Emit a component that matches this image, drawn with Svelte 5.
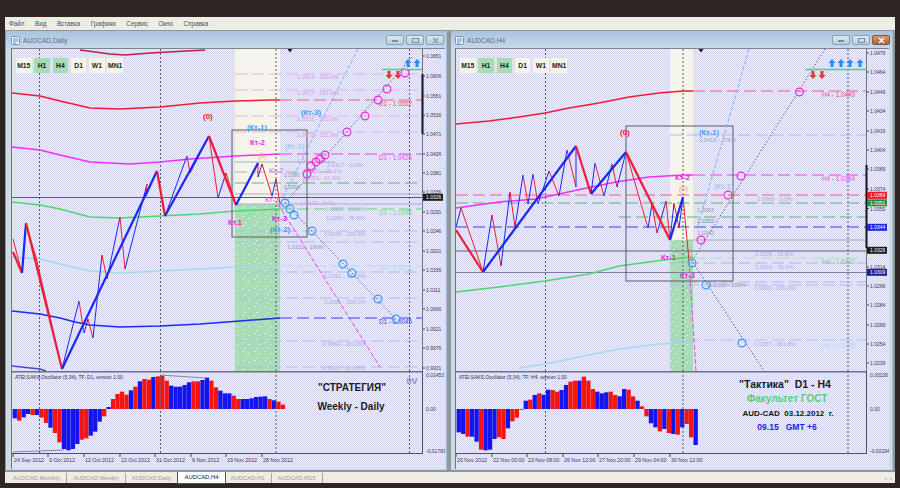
<script>
  // Two MT4 chart windows, all coordinates in page pixels (svg viewBox keeps them absolute)
  const menu = ['Файл', 'Вид', 'Вставка', 'Графики', 'Сервис', 'Окно', 'Справка'];
  const tfs = [
    { name: 'M15' }, { name: 'H1', on: true }, { name: 'H4', on: true },
    { name: 'D1' }, { name: 'W1' }, { name: 'MN1' }
  ];
  const tabs = ['AUDCAD,Monthly', 'AUDCAD,Weekly', 'AUDCAD,Daily', 'AUDCAD,H4', 'AUDCAD,H1', 'AUDCAD,M15'];

  const PINK = '#e6aeea', RED = '#f2607c', MAG = '#f040ea', GRN = '#62d86a', TEAL = '#b8dcea', BLUE = '#3a44e4', PALE = '#aebcea', GRY = '#a9aec4', DGRN = '#62b46c';
  const LBL = '#a9aede', LPK = '#d49ee0';

  const charts = [
    {
      title: 'AUDCAD,Daily', x: 12, w: 410, active: false,
      verticals: [39.5, 160.5, 276, 409.5],
      band: { x: 235, w: 45, split: 205 },
      curves: [
        { c: '#c02040', p: '80,51 110,55 125,56 150,54 205,51' },
        { c: '#f01c2c', p: '12,94 40,97 60,102 90,109 120,110 160,108 200,104 235,102 270,101 280,101' },
        { c: '#f030f0', p: '12,148 40,151 60,156 90,163 110,164 130,165 160,163 190,160 235,157 280,155' },
        { c: '#4cd868', p: '12,203 40,206 60,210 90,218 120,219 160,217 200,215 235,212 280,210' },
        { c: '#a0dce0', p: '12,258 40,260 60,265 90,272 120,274 160,272 200,270 235,268 280,267' },
        { c: '#1c2ce8', p: '12,312 40,315 60,319 75,323 90,326 120,328 160,327 200,325 240,322 280,319' },
        { c: '#4050c0', p: '12,367 40,370 46,372' }
      ],
      solid: [
        { y: 163, a: 235, b: 335, c: GRY }, { y: 195, a: 235, b: 422, c: GRY }, { y: 205, a: 235, b: 422, c: GRY },
        { y: 198.5, a: 12, b: 422, c: '#5c5c6c' }
      ],
      dashes: [
        { y: 75, a: 235, b: 422, c: PINK }, { y: 91, a: 235, b: 422, c: PINK }, { y: 117, a: 235, b: 422, c: PINK },
        { y: 133, a: 235, b: 422, c: PINK }, { y: 101, a: 280, b: 422, c: RED }, { y: 155, a: 280, b: 422, c: MAG },
        { y: 173, a: 235, b: 335, c: GRY }, { y: 184, a: 235, b: 422, c: DGRN }, { y: 210, a: 280, b: 422, c: GRN },
        { y: 232, a: 235, b: 422, c: PALE }, { y: 243, a: 235, b: 422, c: PALE }, { y: 267, a: 280, b: 422, c: TEAL },
        { y: 273, a: 235, b: 422, c: PALE }, { y: 299, a: 235, b: 422, c: PALE }, { y: 319, a: 280, b: 422, c: BLUE },
        { y: 342, a: 235, b: 422, c: PALE }, { y: 368, a: 235, b: 422, c: PALE }
      ],
      box: { x: 232, y: 131, w: 75, h: 107 },
      thin: [[13,240],[22,274],[26,224],[34,252],[36,258],[62,370],[79,302],[84,334],[88,320],[93,339],[102,256],[107,280],[120,218],[125,270],[147,185],[146,197],[157,172],[165,217],[187,157],[190,174],[209,137],[218,199],[226,174],[236,206],[258,164],[258,178],[262,165],[272,197],[276,180],[280,205]],
      thick: [[13,253],[22,274],[26,224],[62,370],[157,172],[165,217],[209,137],[236,206],[258,164]],
      dotted: '412,58 285,204 396,320',
      sky: '358,50 282,200',
      fall: '278,205 380,368',
      magCircles: [[405,74],[387,90],[378,101],[365,117],[347,133],[325,156],[320,160],[316,163],[311,167],[307,175]],
      blueCircles: [[285,204],[290,210],[294,216],[312,232],[343,265],[352,274],[378,300],[396,320]],
      bar: { a: 382, b: 422 },
      ups: [408, 417],
      downs: [389, 398],
      marker: 290,
      texts: [
        { x: 203, y: 120, t: '(0)', c: '#f0202c', b: 1, s: 8 },
        { x: 247, y: 131, t: '(Кт-1)', c: '#3a9cf0', b: 1, s: 7.5 },
        { x: 250, y: 146, t: 'Кт-2', c: '#f020e0', b: 1, s: 7.5 },
        { x: 285, y: 150, t: '(Кт-1)', c: '#8cc0f0', s: 7.5 },
        { x: 301, y: 116, t: '(Кт-3)', c: '#3a9cf0', b: 1, s: 7.5 },
        { x: 258, y: 159, t: '(0)', c: '#e89090', s: 7 },
        { x: 269, y: 174, t: 'Кт-2', c: '#e070e0', s: 7.5 },
        { x: 265, y: 203, t: 'Кт-1', c: '#f040e8', s: 7.5 },
        { x: 272, y: 222, t: 'Кт-3', c: '#f020e0', b: 1, s: 7.5 },
        { x: 228, y: 226, t: 'Кт.1', c: '#f020e0', b: 1, s: 7.5 },
        { x: 270, y: 233, t: '(Кт-2)', c: '#3a9cf0', b: 1, s: 7.5 },
        { x: 297, y: 80, t: '1.0614 - 300.0%', c: LPK }, { x: 297, y: 96, t: '1.0577 - 261.8%', c: LPK },
        { x: 297, y: 122, t: '1.0516 - 200.0%', c: LPK }, { x: 297, y: 138, t: '1.0475 - 161.8%', c: LPK },
        { x: 297, y: 164, t: '1.0...- 0.0%', c: LPK }, { x: 327, y: 168, t: '1.0417 - 0.0%', c: LBL },
        { x: 303, y: 174, t: '1.0381 - 38.2%', c: LPK }, { x: 284, y: 178, t: '1.0390', c: '#9a9ab0', s: 5.2 },
        { x: 302, y: 181, t: '1.0351 - 61.8%', c: LPK }, { x: 284, y: 190, t: '1.0358', c: '#6ca47c', s: 5.2 },
        { x: 300, y: 206, t: '1.0320 - 0.0%', c: LPK }, { x: 326, y: 212, t: '1.0309 - 61.8%', c: LBL },
        { x: 326, y: 221, t: '1.0286 - 76.4%', c: LBL }, { x: 324, y: 237, t: '1.0249 - 100.0%', c: LBL },
        { x: 287, y: 250, t: '1.0221 - 190%', c: '#9498c4' }, { x: 324, y: 279, t: '1.0151 - 161.8%', c: LBL },
        { x: 324, y: 305, t: '1.0091 - 200.0%', c: LBL }, { x: 323, y: 347, t: '0.9993 - 261.8%', c: LBL },
        { x: 323, y: 371, t: '0.9931 - 314.6%', c: LBL },
        { x: 379, y: 107, t: 'D1 - 1.0552', c: '#f0506c', s: 6.3 }, { x: 379, y: 161, t: 'D1 - 1.0425', c: '#f050e8', s: 6.3 },
        { x: 379, y: 216, t: 'D1 - 1.0296', c: '#70d880', s: 6.3 }, { x: 379, y: 271, t: 'D1 - 1.0175', c: '#b0dce0', s: 6.3 },
        { x: 379, y: 325, t: 'D1 - 1.0045', c: '#3a44d4', s: 6.3 }
      ],
      axis: [[57,'1.0651'],[77,'1.0606'],[97,'1.0561'],[116,'1.0516'],[135,'1.0471'],[155,'1.0426'],[174,'1.0381'],[193,'1.0336'],[213,'1.0291'],[232,'1.0246'],[252,'1.0201'],[271,'1.0156'],[291,'1.0111'],[310,'1.0066'],[330,'1.0021'],[349,'0.9976'],[369,'0.9931']],
      axisBar: { a: 75, b: 135 },
      prices: [{ y: 198, t: '1.0326', c: '#1c1c1c' }],
      baseline: 410,
      bars: 'b-28 r-35 b-25 b-15 r-18 b-18 r-26 r-42 b-56 r-72 r-100 b-120 b-124 b-120 b-105 r-92 r-88 b-80 b-68 b-38 r-22 b6 r30 r45 r52 r43 b56 r67 b83 r90 r88 b96 r98 r100 r85 b70 b67 b67 b72 b80 r83 r83 b87 b94 r85 r65 b55 b47 b47 r40 r30 b30 b30 b32 b36 b37 b38 r30 b26 r22 r13',
      indLabel: 'ATEI.SAKS.Oscillator (5,34), TF: D1, version 1.00',
      indLines: ['13,453 64,451', '160,376 206,379'],
      indAxis: [[378,'0.01453'],[412,'0.00'],[454,'-0.01781']],
      notes: [
        { x: 352, y: 392, t: '"СТРАТЕГИЯ"', c: '#1c1c1c', s: 10 },
        { x: 351, y: 411, t: 'Weekly - Daily', c: '#1c1c1c', s: 10 },
        { x: 412, y: 385, t: '0V', c: '#8c94b4', s: 9 }
      ],
      times: [[13,'24 Sep 2012'],[48,'3 Oct 2012'],[84,'12 Oct 2012'],[120,'22 Oct 2012'],[155,'31 Oct 2012'],[191,'9 Nov 2012'],[226,'19 Nov 2012'],[262,'28 Nov 2012']]
    },
    {
      title: 'AUDCAD,H4', x: 457, w: 410, active: true,
      verticals: [546.5, 684, 849],
      band: { x: 671, w: 23, split: 241 },
      curves: [
        { c: '#f01c2c', p: '457,125 490,122 520,118 546,114 570,109 600,104 630,98 660,94 684,92 694,92' },
        { c: '#f030f0', p: '457,209 500,203 537,200 583,190 617,183 650,178 684,176 694,176' },
        { c: '#4cd868', p: '457,293 500,288 546,282 590,275 620,267 650,263 672,260 694,258' },
        { c: '#a0dce0', p: '520,369 546,365 590,356 620,350 660,345 694,343' }
      ],
      solid: [
        { y: 241, a: 690, b: 867, c: GRY }, { y: 252, a: 457, b: 867, c: '#8a8a9a', w: 1.5 }, { y: 273.5, a: 457, b: 867, c: '#7c7ca0', w: 1.2 }
      ],
      dashes: [
        { y: 92, a: 694, b: 867, c: RED }, { y: 136, a: 671, b: 867, c: PALE }, { y: 176, a: 694, b: 867, c: MAG },
        { y: 196, a: 457, b: 867, c: RED }, { y: 204, a: 457, b: 867, c: DGRN }, { y: 218, a: 620, b: 867, c: DGRN },
        { y: 228, a: 457, b: 867, c: BLUE }, { y: 259, a: 694, b: 867, c: '#b0e0c0' }, { y: 264, a: 671, b: 867, c: '#94bcf0' },
        { y: 283, a: 671, b: 867, c: PALE }, { y: 286, a: 671, b: 867, c: PALE }, { y: 341, a: 671, b: 867, c: '#a4c8f0' }
      ],
      box: { x: 627, y: 127, w: 107, h: 155 },
      thin: [[457,228],[462,209],[484,273],[493,216],[502,267],[511,193],[516,228],[524,176],[529,205],[534,175],[539,205],[550,172],[560,197],[568,151],[577,188],[577,147],[592,195],[596,164],[605,197],[613,165],[618,188],[627,153],[649,229],[653,205],[658,234],[667,202],[671,241],[675,204],[680,229],[684,198],[690,262]],
      thick: [[457,231],[484,273],[577,147],[592,195],[627,153],[671,241],[684,198]],
      dotted: '826,50 693,262 765,372',
      sky: '750,50 698,230',
      fall: '690,262 697,372',
      magCircles: [[800.5,93],[742,177],[729,196],[702,241]],
      blueCircles: [[693,264],[707,286],[743,344]],
      bar: { a: 806, b: 867 },
      ups: [833, 842, 851, 861],
      downs: [814, 823],
      marker: 702,
      texts: [
        { x: 621, y: 136, t: '(0)', c: '#f0202c', b: 1, s: 8 },
        { x: 700, y: 136, t: '(Кт-1)', c: '#3a9cf0', b: 1, s: 7.5 },
        { x: 676, y: 181, t: 'Кт-2', c: '#f020e0', b: 1, s: 7.5 },
        { x: 680, y: 192, t: '(0)', c: '#e89070', s: 7 },
        { x: 715, y: 190, t: '(Кт-1)', c: '#8cc0f0', s: 7.5 },
        { x: 662, y: 261, t: 'Кт-1', c: '#f020e0', b: 1, s: 7.5 },
        { x: 681, y: 279, t: 'Кт-3', c: '#f020e0', b: 1, s: 7.5 },
        { x: 700, y: 143, t: '1.0415 - 276%', c: '#a0a4c0' },
        { x: 758, y: 202, t: '1.0369 - 0.0%', c: LBL }, { x: 698, y: 213, t: '1.0361', c: '#9498b8', s: 5.6 },
        { x: 698, y: 224, t: '1.0352', c: '#6c9c7c', s: 5.6 }, { x: 698, y: 236, t: '1.0342', c: '#9498b8', s: 5.6 },
        { x: 756, y: 257, t: '1.0326 - 61.8%', c: LBL }, { x: 756, y: 270, t: '1.0316 - 76.4%', c: LBL },
        { x: 755, y: 291, t: '1.0300 - 100.0%', c: LBL }, { x: 710, y: 288, t: '1.0302 - 190%', c: '#9498c4' },
        { x: 755, y: 347, t: '1.0257 - 161.8%', c: LBL },
        { x: 823, y: 98, t: 'H4 - 1.0449', c: '#f0506c', s: 6.3 }, { x: 823, y: 182, t: 'H4 - 1.0384', c: '#f050e8', s: 6.3 },
        { x: 823, y: 265, t: 'H4 - 1.0320', c: '#70d880', s: 6.3 }, { x: 823, y: 349, t: 'H4 - 1.0255', c: '#b0dce0', s: 6.3 }
      ],
      axis: [[54,'1.0479'],[73,'1.0464'],[93,'1.0449'],[112,'1.0434'],[132,'1.0419'],[151,'1.0404'],[170,'1.0389'],[190,'1.0374'],[209.5,'1.0359'],[268,'1.0314'],[287,'1.0299'],[306,'1.0284'],[326,'1.0269'],[345,'1.0254'],[364,'1.0239']],
      axisBar: { a: 166, b: 249 },
      prices: [
        { y: 196, t: '1.0369', c: '#f01824' }, { y: 203.5, t: '1.0351', c: '#2c8c44' }, { y: 228, t: '1.0344', c: '#1c28e8' },
        { y: 251, t: '1.0326', c: '#1c1c1c' }, { y: 273, t: '1.0309', c: '#1c2484' }
      ],
      baseline: 410,
      bars: 'b-70 b-75 r-83 b-83 b-98 r-122 b-124 b-122 b-90 r-85 r-90 b-58 r-37 r-26 b-2 b25 r28 b42 r47 b43 b58 r57 r52 b57 b72 r82 r85 b85 r97 r85 r60 b52 b47 b50 r52 r42 b38 b60 r58 r38 b25 r8 r-22 b-43 b-55 r-67 b-60 r-72 b-75 r-77 b-55 r-45 r-85 b-108',
      indLabel: 'ATEI.SAKS.Oscillator (5,34), TF: H4, version 1.00',
      indLines: [],
      indAxis: [[378,'0.00236'],[412,'0.00'],[454,'-0.00294']],
      notes: [
        { x: 786, y: 389, t: '"Тактика"  D1 - H4', c: '#1c1c1c', s: 10.5 },
        { x: 788, y: 403, t: 'Факультет ГОСТ', c: '#52d070', s: 10 },
        { x: 789, y: 417, t: 'AUD-CAD  03.12.2012  г.', c: '#141414', s: 8 },
        { x: 788, y: 431, t: '09.15   GMT +6', c: '#1c28e8', s: 8.5 }
      ],
      times: [[457,'20 Nov 2012'],[493,'22 Nov 00:00'],[528,'23 Nov 08:00'],[564,'26 Nov 12:00'],[599,'27 Nov 20:00'],[635,'29 Nov 04:00'],[671,'30 Nov 12:00']]
    }
  ];

  // up moves are blue, down moves red
  function segments(pts) {
    const out = [];
    for (let i = 1; i < pts.length; i++) {
      out.push({ a: pts[i - 1], b: pts[i], c: pts[i][1] < pts[i - 1][1] ? '#1c28f0' : '#f01c34' });
    }
    return out;
  }

  function histogram(c) {
    return c.bars.split(' ').map((s, i) => {
      const v = Number(s.slice(1)) / 3;
      return {
        x: c.x + 0.6 + i * 4.47,
        y: v > 0 ? c.baseline - v : c.baseline,
        h: Math.abs(v),
        c: s[0] === 'b' ? '#1414f0' : '#f41414'
      };
    });
  }
</script>

<div class="screen">
  <div class="terminal">
    <nav class="menu">
      {#each menu as m}<span>{m}</span>{/each}
    </nav>

    <div class="mdi">
      {#each charts as c}
        <section class="window">
          <header class="title">
            <svg class="doc" width="9" height="9" viewBox="0 0 9 9">
              <rect x="0.5" y="0.5" width="8" height="8" rx="1" fill="#e8f0f8" stroke="#6c94bc" />
              <path d="M2 3h5M2 5h5M2 7h3" stroke="#6c94bc" fill="none" />
            </svg>
            <span class="name">{c.title}</span>
            <div class="btns">
              <button class="wbtn"><i class="min"></i></button>
              <button class="wbtn"><i class="max"></i></button>
              <button class="wbtn" class:close={c.active}>
                <svg width="7" height="7" viewBox="0 0 7 7"><path d="M1 1l5 5M6 1l-5 5" stroke={c.active ? '#fff' : '#8a9aac'} stroke-width="1.4" /></svg>
              </button>
            </div>
          </header>

          <div class="chart">
            <div class="main">
              <svg width="433" height="322" viewBox="{c.x} 50 433 322">
                <defs>
                  <pattern id="dots{c.x}" width="11" height="9" patternUnits="userSpaceOnUse">
                    <rect x="1" y="1" width="1" height="1" fill="#fff" />
                    <rect x="6" y="3" width="1" height="1" fill="#fff" />
                    <rect x="3" y="7" width="1" height="1" fill="#fff" />
                  </pattern>
                </defs>
                <rect x={c.band.x} y="50" width={c.band.w} height={c.band.split - 50} fill="#f5f4ea" />
                <rect x={c.band.x} y={c.band.split} width={c.band.w} height={372 - c.band.split} fill="#a8dcb6" />
                <rect x={c.band.x} y={c.band.split} width={c.band.w} height={372 - c.band.split} fill="url(#dots{c.x})" />

                {#each c.verticals as v}
                  <line x1={v} x2={v} y1="50" y2="372" stroke="#555a70" stroke-dasharray="2 2" />
                {/each}
                {#each c.solid as l}
                  <line x1={l.a} x2={l.b} y1={l.y} y2={l.y} stroke={l.c} stroke-width={l.w || 1} />
                {/each}
                {#each c.dashes as l}
                  <line x1={l.a} x2={l.b} y1={l.y} y2={l.y} stroke={l.c} stroke-dasharray="12 5" />
                {/each}
                {#each c.curves as k}
                  <polyline points={k.p} fill="none" stroke={k.c} stroke-width="1.5" />
                {/each}

                <rect x={c.box.x} y={c.box.y} width={c.box.w} height={c.box.h} fill="none" stroke="#5a5a62" />
                <polyline points={c.sky} fill="none" stroke="#7ab4f0" stroke-dasharray="4 2" />
                <polyline points={c.fall} fill="none" stroke="#ee44dd" stroke-dasharray="5 2" />
                <polyline points={c.dotted} fill="none" stroke="#60607a" stroke-dasharray="1.5 2" />

                {#each segments(c.thin) as s}
                  <line x1={s.a[0]} y1={s.a[1]} x2={s.b[0]} y2={s.b[1]} stroke={s.c} />
                {/each}
                {#each segments(c.thick) as s}
                  <line x1={s.a[0]} y1={s.a[1]} x2={s.b[0]} y2={s.b[1]} stroke={s.c} stroke-width="2.2" />
                {/each}

                {#each c.texts as t}
                  <text x={t.x} y={t.y} fill={t.c} font-size={t.s || 5.7} font-weight={t.b ? 700 : 400}>{t.t}</text>
                {/each}

                {#each c.magCircles as m}
                  <circle cx={m[0]} cy={m[1]} r="3.9" fill="none" stroke="#f428dc" stroke-width="1.2" />
                {/each}
                {#each c.blueCircles as m}
                  <circle cx={m[0]} cy={m[1]} r="3.9" fill="none" stroke="#3a9cf0" stroke-width="1.2" />
                {/each}

                <line x1={c.bar.a} x2={c.bar.b} y1="70.5" y2="70.5" stroke="#56d45e" stroke-width="1.6" />
                {#each c.ups as u}
                  <path d="M{u} 60l3.5 4h-2v4h-3v-4h-2z" fill="#2a8cf0" />
                {/each}
                {#each c.downs as d}
                  <path d="M{d} 80l3.5-4h-2v-4h-3v4h-2z" fill="#f0303c" />
                {/each}
                <path d="M{c.marker - 2.5} 50h5l-2.5 3.5z" fill="#1c1c1c" />

                <line x1={c.x + 410.5} x2={c.x + 410.5} y1="50" y2="372" stroke="#6c7480" />
                <line x1={c.x + 410.5} x2={c.x + 410.5} y1={c.axisBar.a} y2={c.axisBar.b} stroke="#141414" stroke-width="2" />
                {#each c.axis as a}
                  <line x1={c.x + 411} x2={c.x + 413} y1={a[0]} y2={a[0]} stroke="#444" />
                  <text class="ax" x={c.x + 414} y={a[0] + 2}>{a[1]}</text>
                {/each}
                {#each c.prices as p}
                  <rect x={c.x + 411} y={p.y - 3.2} width="20" height="7" fill={p.c} />
                  <text class="px" x={c.x + 414} y={p.y + 2.2}>{p.t}</text>
                {/each}
              </svg>

              <div class="tfs">
                {#each tfs as t}
                  <span class="tf" class:on={t.on}>{t.name}</span>
                {/each}
              </div>
            </div>

            <div class="ind">
              <svg width="433" height="83" viewBox="{c.x} 372 433 83">
                {#each histogram(c) as b}
                  <rect x={b.x} y={b.y} width="4.3" height={b.h} fill={b.c} />
                {/each}
                {#each c.indLines as p}
                  <polyline points={p} fill="none" stroke="#8088a8" stroke-width="1.2" />
                {/each}
                {#each c.verticals as v}
                  <line x1={v} x2={v} y1="372" y2="455" stroke="#555a70" stroke-dasharray="2 2" />
                {/each}
                <text class="lab" x={c.x + 3} y="380">{c.indLabel}</text>
                {#each c.notes as n}
                  <text x={n.x} y={n.y} fill={n.c} font-size={n.s} font-weight="700" text-anchor="middle" xml:space="preserve">{n.t}</text>
                {/each}
                <line x1={c.x} x2={c.x + 410} y1="372.5" y2="372.5" stroke="#6c7480" stroke-width="2" />
                <line x1={c.x} x2={c.x + 410} y1="454.5" y2="454.5" stroke="#4c5460" />
                <line x1={c.x + 410.5} x2={c.x + 410.5} y1="372" y2="455" stroke="#4c5460" />
                {#each c.indAxis as a}
                  <text class="ax" x={c.x + 414} y={a[0]}>{a[1]}</text>
                {/each}
              </svg>
            </div>

            <div class="times">
              <svg width="433" height="15" viewBox="{c.x} 455 433 15">
                {#each c.times as t}
                  <line x1={t[0]} x2={t[0]} y1="455" y2="458" stroke="#444" />
                  <text class="tm" x={t[0] + 1} y="463">{t[1]}</text>
                {/each}
              </svg>
            </div>
          </div>
        </section>
      {/each}
    </div>

    <footer class="tabs">
      {#each tabs as t, i}
        <span class="tab" class:current={i === 3}>{t}</span>
      {/each}
      <span class="arrows">‹ &nbsp;›</span>
    </footer>
  </div>
</div>

<style>
  :global(body) {
    margin: 0;
    background: #2d2624;
  }

  .screen {
    width: 900px;
    height: 488px;
    padding-top: 17px;
    box-sizing: border-box;
    overflow: hidden;
    font-family: "Liberation Sans", Arial, sans-serif;
  }

  .terminal {
    margin-left: 5px;
    width: 890px;
    height: 466px;
    display: flex;
    flex-direction: column;
    background: #dfe0e4;
  }

  .menu {
    height: 13px;
    flex: none;
    display: flex;
    align-items: center;
    padding-left: 4px;
    gap: 10.5px;
    font-size: 6.3px;
    color: #4c5058;
    background: repeating-conic-gradient(#e6e4d8 0 25%, #f6f5ee 0 50%) 0 0 / 2px 2px;
  }

  .mdi {
    flex: 1;
    display: flex;
    gap: 4px;
    padding: 1px 2px 0 1px;
    background: #8e969e;
    min-height: 0;
  }

  .window {
    width: 441px;
    height: 439px;
    box-sizing: border-box;
    padding: 0 1px 0 6px;
    background: linear-gradient(180deg, #a9c3de 0, #c8daec 18px, #cfdce8 19px, #cfdce8 100%);
    border-right: 1px solid #a4c4dc;
  }

  .window + .window {
    width: 442px;
    padding-left: 5px;
  }

  .title {
    height: 18px;
    display: flex;
    align-items: center;
    gap: 3px;
    font-size: 6.6px;
    color: #5e6c7c;
  }

  .doc {
    margin-left: -1px;
  }

  .name {
    flex: 1;
  }

  .btns {
    display: flex;
    gap: 2px;
    padding-right: 1px;
  }

  .wbtn {
    width: 18px;
    height: 10px;
    padding: 0;
    display: flex;
    align-items: center;
    justify-content: center;
    border: 1px solid #8ca0b4;
    border-radius: 2px;
    background: linear-gradient(180deg, #dce8f2, #b8cede);
  }

  .wbtn.close {
    background: linear-gradient(180deg, #d89a70, #a8643c);
    border-color: #7c5a48;
  }

  .min {
    display: block;
    width: 6px;
    height: 2px;
    margin-top: 2px;
    background: #7c8c9c;
  }

  .max {
    display: block;
    width: 5px;
    height: 3px;
    border: 1px solid #7c8c9c;
  }

  .chart {
    width: 433px;
    background: repeating-conic-gradient(#d0d4ec 0 25%, #f0f0ec 0 50%) 0 0 / 2px 2px;
    border-top: 1px solid #7c848c;
    margin-top: -1px;
    box-shadow: -1px 0 0 #6c7480;
  }

  .main {
    position: relative;
    height: 322px;
  }

  .ind {
    height: 83px;
  }

  .times {
    height: 15px;
  }

  .main svg,
  .ind svg,
  .times svg {
    display: block;
  }

  text {
    font-family: "Liberation Sans", Arial, sans-serif;
  }

  .ax {
    font-size: 5px;
    fill: #3c4048;
  }

  .px {
    font-size: 5px;
    fill: #fff;
  }

  .lab {
    font-size: 4.9px;
    fill: #333;
  }

  .tm {
    font-size: 5.3px;
    fill: #3c4048;
  }

  .tfs {
    position: absolute;
    left: 4px;
    top: 9px;
    display: flex;
    gap: 2.8px;
  }

  .tf {
    width: 15.5px;
    height: 15px;
    display: flex;
    align-items: center;
    justify-content: center;
    background: #f5f4ea;
    font-size: 6.8px;
    font-weight: 700;
    color: #1c1c1c;
  }

  .tf.on {
    background: #a8dcb6;
  }

  .tabs {
    height: 11px;
    flex: none;
    display: flex;
    align-items: center;
    position: relative;
    font-size: 5.9px;
    color: #9a9a9a;
    padding-left: 2px;
    background: repeating-conic-gradient(#e6e4d8 0 25%, #f6f5ee 0 50%) 0 0 / 2px 2px;
  }

  .tab {
    padding: 0 6px;
    line-height: 10px;
    border-right: 1px solid #a8a8a8;
  }

  .tab.current {
    background: #fff;
    color: #141414;
    border: 1px solid #555;
    border-top: 0;
    line-height: 10px;
    margin: 0 -1px 0 -1px;
    height: 11px;
  }

  .arrows {
    position: absolute;
    right: 3px;
    color: #8a8a8a;
  }
</style>
